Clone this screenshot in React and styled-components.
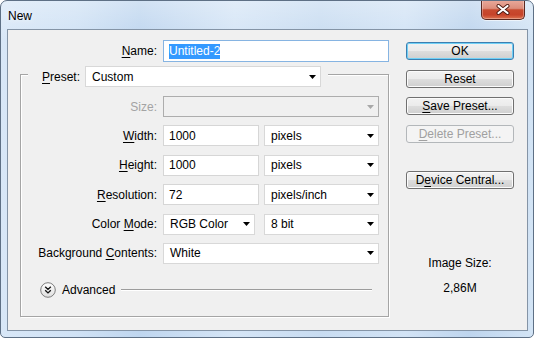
import React from "react";
import styled, { createGlobalStyle } from "styled-components";

const Global = createGlobalStyle`
  html, body { margin: 0; padding: 0; background: #ffffff; }
  body {
    font-family: "Liberation Sans", Arial, sans-serif;
    font-size: 12px;
    color: #000;
  }
  #root { width: 534px; height: 338px; }
`;

const Window = styled.div`
  box-sizing: border-box;
  width: 534px;
  height: 338px;
  border: 1px solid #5e7085;
  border-radius: 7px 7px 5px 5px;
  background:
    linear-gradient(180deg, rgba(255, 255, 255, 0.3), rgba(255, 255, 255, 0) 40px),
    linear-gradient(90deg, #d8e7f7 0%, #d0e2f5 14%, #bfd6ef 26%, #d5e5f6 44%, #c8dcf1 60%, #d2e3f5 76%, #bed5ee 88%, #d3e4f5 100%);
  display: flex;
  flex-direction: column;
  padding: 0 5px 6px 6px;
  overflow: hidden;
`;

const TitleBar = styled.div`
  height: 28px;
  display: flex;
  align-items: flex-start;
  justify-content: space-between;
`;

const Title = styled.div`
  margin: 8px 0 0 1px;
  font-size: 12px;
  line-height: 14px;
  color: #000;
  text-shadow: 0 0 6px rgba(255, 255, 255, 0.9);
`;

const CloseButton = styled.div`
  box-sizing: border-box;
  width: 44px;
  height: 20px;
  margin: -1px 3px 0 0;
  border: 1px solid #5b2820;
  border-top: none;
  border-radius: 0 0 5px 5px;
  background: linear-gradient(180deg, #eaaa9c 0%, #dc8d7b 44%, #c84a2f 52%, #c6432a 78%, #dd7451 100%);
  box-shadow: inset 0 0 0 1px rgba(255, 255, 255, 0.3), 0 1px 0 rgba(255, 255, 255, 0.6);
  display: flex;
  align-items: center;
  justify-content: center;
`;

const Client = styled.div`
  flex: 1;
  box-sizing: border-box;
  background: #f0f0f0;
  border: 1px solid #8494a6;
  display: flex;
  align-items: flex-start;
  gap: 17px;
  padding: 10px 0 0 12px;
`;

const LeftCol = styled.div`
  width: 369px;
  display: flex;
  flex-direction: column;
`;

const NameRow = styled.div`
  display: grid;
  grid-template-columns: 137px 226px;
  column-gap: 6px;
  height: 22px;
`;

const Label = styled.div`
  align-self: center;
  text-align: right;
  white-space: nowrap;
  line-height: 14px;
  color: ${(p) => (p.$disabled ? "#a3a3a3" : "#000")};
`;

const U = styled.span`
  text-decoration: underline;
  text-underline-offset: 2px;
`;

const TextField = styled.div`
  box-sizing: border-box;
  width: ${(p) => (p.$w ? `${p.$w}px` : "100%")};
  height: 100%;
  background: #fff;
  border: 1px solid ${(p) => (p.$focused ? "#86b4e2" : "#d6d6d6")};
  padding: 0 5px;
  display: flex;
  align-items: center;
  white-space: nowrap;
`;

const Selected = styled.span`
  background: #3399ff;
  color: #fff;
  line-height: 15px;
`;

const SelectBox = styled.div`
  box-sizing: border-box;
  width: ${(p) => (p.$w ? `${p.$w}px` : "100%")};
  height: 21px;
  background: ${(p) => (p.$disabled ? "transparent" : "#fff")};
  border: 1px solid ${(p) => (p.$disabled ? "#adadad" : "#d8d8d8")};
  padding: 0 4px 0 6px;
  display: flex;
  align-items: center;
  justify-content: space-between;
  white-space: nowrap;
`;

const Group = styled.div`
  margin-top: 12px;
  border: 1px solid #a5a5a5;
  box-shadow: inset 1px 1px 0 #fff, 1px 1px 0 #fff;
  display: flex;
  flex-direction: column;
  padding-bottom: 18px;
`;

const Legend = styled.div`
  align-self: flex-start;
  margin: -9px 0 0 7px;
  padding: 0 7px 0 14px;
  height: 21px;
  display: flex;
  align-items: center;
  gap: 5px;
  background: #f0f0f0;
`;

const Rows = styled.div`
  margin-top: 9px;
  display: grid;
  grid-template-columns: 136px 216px;
  grid-auto-rows: 21px;
  column-gap: 6px;
  row-gap: 8.4px;
`;

const Pair = styled.div`
  display: flex;
  justify-content: space-between;
`;

const AdvancedRow = styled.div`
  margin-top: 18px;
  height: 16px;
  padding: 0 16px 0 19px;
  display: flex;
  align-items: center;
`;

const AdvancedText = styled.span`
  margin-left: 6px;
  line-height: 14px;
`;

const Rule = styled.div`
  flex: 1;
  height: 1px;
  margin-left: 6px;
  background: #9c9c9c;
  box-shadow: 0 1px 0 #fff;
`;

const RightCol = styled.div`
  width: 108px;
  margin-top: 2px;
  display: flex;
  flex-direction: column;
`;

const ButtonStack = styled.div`
  display: flex;
  flex-direction: column;
  gap: 9.7px;
`;

const Button = styled.div`
  box-sizing: border-box;
  height: 18px;
  margin-top: ${(p) => (p.$spaced ? "18px" : "0")};
  border-radius: 3px;
  border: 1px solid ${(p) => (p.$primary ? "#3c7fb1" : p.$disabled ? "#b3b7ba" : "#707070")};
  background: ${(p) =>
    p.$disabled
      ? "#f4f4f4"
      : "linear-gradient(180deg, #f2f2f2 0%, #ebebeb 48%, #dddddd 52%, #cfcfcf 100%)"};
  box-shadow: ${(p) =>
    p.$primary ? "inset 0 0 0 1px #6fd0f6" : p.$disabled ? "none" : "inset 0 0 0 1px #fbfbfb"};
  color: ${(p) => (p.$disabled ? "#a0a0a0" : "#000")};
  font-size: 12px;
  line-height: 16px;
  text-align: center;
  white-space: nowrap;
`;

const Info = styled.div`
  margin-top: 67px;
  display: flex;
  flex-direction: column;
  align-items: center;
  gap: 11px;
  line-height: 14px;
`;

const Arrow = ({ disabled }) => (
  <svg width="7" height="4" viewBox="0 0 7 4">
    <polygon points="0,0 7,0 3.5,4" fill={disabled ? "#a8a8a8" : "#000"} />
  </svg>
);

const Select = ({ children, w, disabled }) => (
  <SelectBox $w={w} $disabled={disabled}>
    <span>{children}</span>
    <Arrow disabled={disabled} />
  </SelectBox>
);

const ExpandIcon = () => (
  <svg width="16" height="16" viewBox="0 0 16 16">
    <defs>
      <linearGradient id="exp" x1="0" y1="0" x2="0" y2="1">
        <stop offset="0" stopColor="#ffffff" />
        <stop offset="1" stopColor="#dedede" />
      </linearGradient>
    </defs>
    <circle cx="8" cy="8" r="7.3" fill="url(#exp)" stroke="#7d7d7d" strokeWidth="1" />
    <path d="M5.2 4.8 L8 7.4 L10.8 4.8 M5.2 8.3 L8 10.9 L10.8 8.3" fill="none" stroke="#111" strokeWidth="1.4" />
  </svg>
);

export default function App() {
  return (
    <>
      <Global />
      <Window>
        <TitleBar>
          <Title>New</Title>
          <CloseButton>
            <svg width="14" height="11" viewBox="0 0 14 11">
              <path d="M2.5 2 L11.5 9 M11.5 2 L2.5 9" stroke="#4d1a12" strokeWidth="4" strokeLinecap="round" />
              <path d="M2.5 2 L11.5 9 M11.5 2 L2.5 9" stroke="#ffffff" strokeWidth="2.2" strokeLinecap="round" />
            </svg>
          </CloseButton>
        </TitleBar>
        <Client>
          <LeftCol>
            <NameRow>
              <Label>
                <U>N</U>ame:
              </Label>
              <TextField $focused>
                <Selected>Untitled-2</Selected>
              </TextField>
            </NameRow>
            <Group>
              <Legend>
                <Label>
                  <U>P</U>reset:
                </Label>
                <Select w={236}>Custom</Select>
              </Legend>
              <Rows>
                <Label $disabled>Size:</Label>
                <Select disabled />

                <Label>
                  <U>W</U>idth:
                </Label>
                <Pair>
                  <TextField $w={96}>1000</TextField>
                  <Select w={115}>pixels</Select>
                </Pair>

                <Label>
                  <U>H</U>eight:
                </Label>
                <Pair>
                  <TextField $w={96}>1000</TextField>
                  <Select w={115}>pixels</Select>
                </Pair>

                <Label>
                  <U>R</U>esolution:
                </Label>
                <Pair>
                  <TextField $w={96}>72</TextField>
                  <Select w={115}>pixels/inch</Select>
                </Pair>

                <Label>
                  Color <U>M</U>ode:
                </Label>
                <Pair>
                  <Select w={92}>RGB Color</Select>
                  <Select w={115}>8 bit</Select>
                </Pair>

                <Label>
                  Background <U>C</U>ontents:
                </Label>
                <Select>White</Select>
              </Rows>
              <AdvancedRow>
                <ExpandIcon />
                <AdvancedText>Advanced</AdvancedText>
                <Rule />
              </AdvancedRow>
            </Group>
          </LeftCol>
          <RightCol>
            <ButtonStack>
              <Button $primary>OK</Button>
              <Button>Reset</Button>
              <Button>
                <U>S</U>ave Preset...
              </Button>
              <Button $disabled>
                <U>D</U>elete Preset...
              </Button>
              <Button $spaced>
                D<U>e</U>vice Central...
              </Button>
            </ButtonStack>
            <Info>
              <span>Image Size:</span>
              <span>2,86M</span>
            </Info>
          </RightCol>
        </Client>
      </Window>
    </>
  );
}
